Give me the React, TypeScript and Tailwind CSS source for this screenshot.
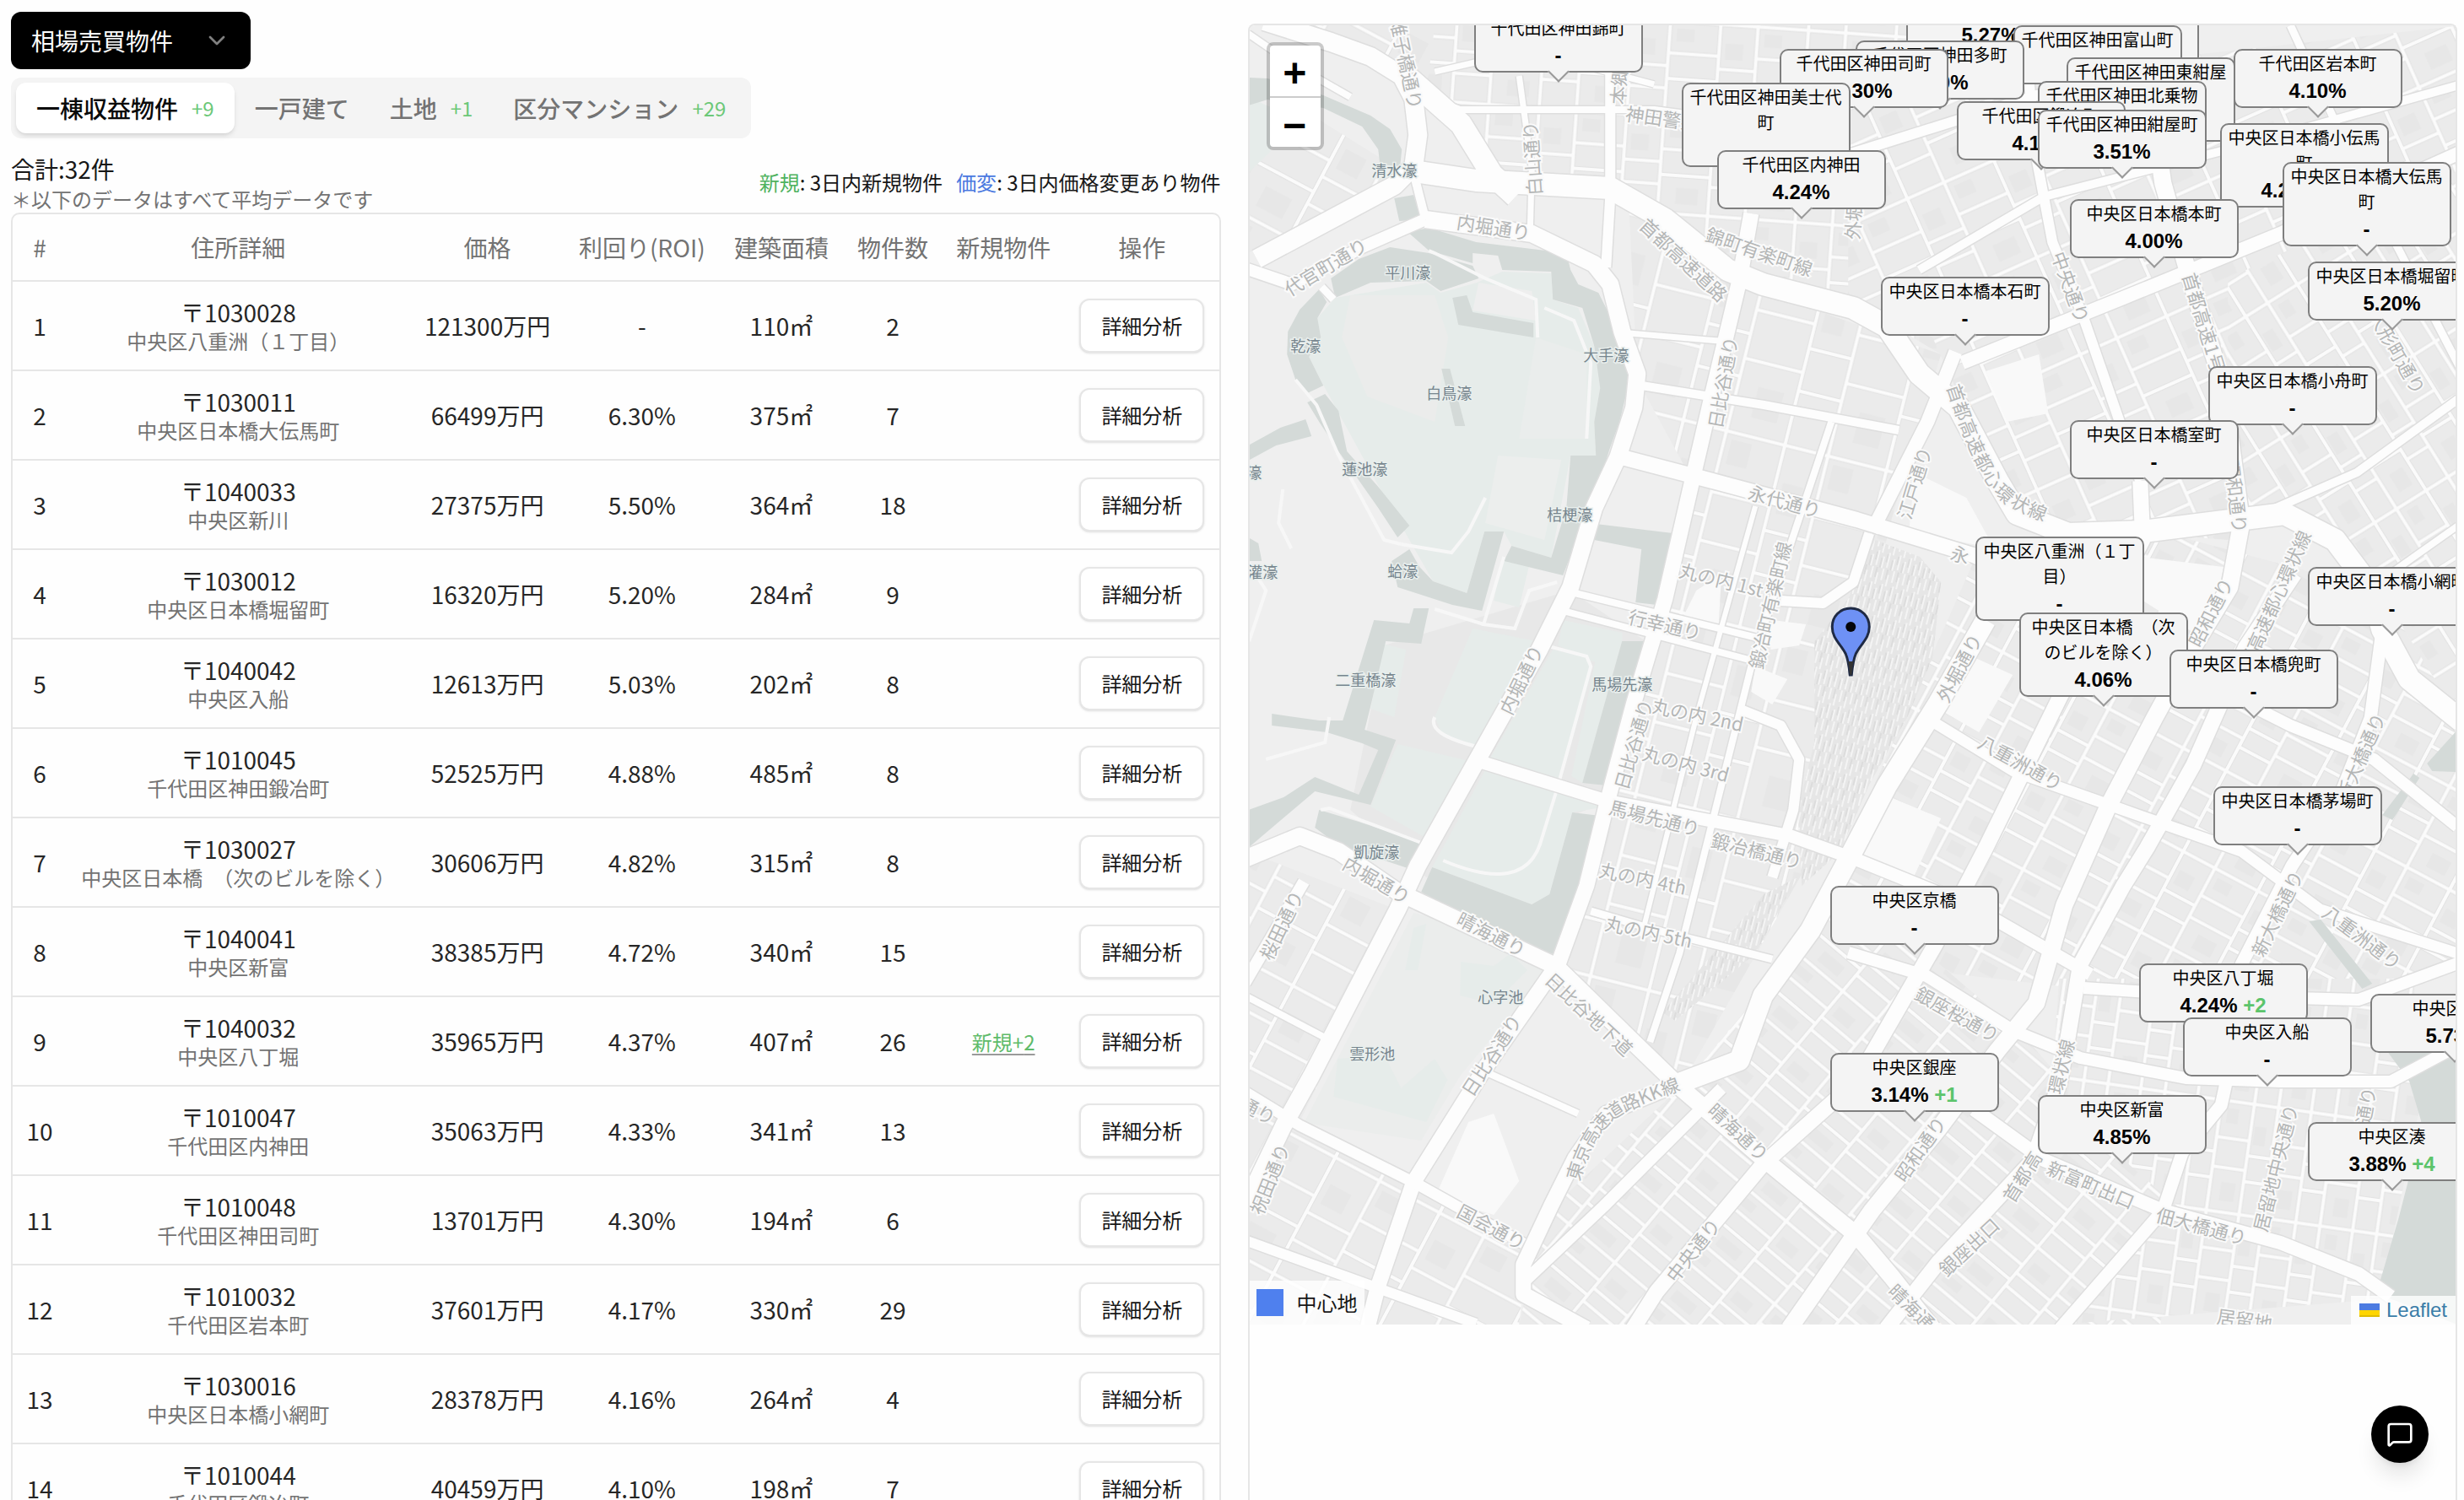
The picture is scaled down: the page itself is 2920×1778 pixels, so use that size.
import { useState } from "react";
import { ChevronDown, MessageSquare } from "lucide-react";

type Row = {
  zip: string;
  area: string;
  price: string;
  roi: string;
  size: string;
  count: number;
  added?: number;
};

const rows: Row[] = [
  { zip: "1030028", area: "中央区八重洲（１丁目）", price: "121300", roi: "-", size: "110", count: 2 },
  { zip: "1030011", area: "中央区日本橋大伝馬町", price: "66499", roi: "6.30%", size: "375", count: 7 },
  { zip: "1040033", area: "中央区新川", price: "27375", roi: "5.50%", size: "364", count: 18 },
  { zip: "1030012", area: "中央区日本橋堀留町", price: "16320", roi: "5.20%", size: "284", count: 9 },
  { zip: "1040042", area: "中央区入船", price: "12613", roi: "5.03%", size: "202", count: 8 },
  { zip: "1010045", area: "千代田区神田鍛冶町", price: "52525", roi: "4.88%", size: "485", count: 8 },
  { zip: "1030027", area: "中央区日本橋　（次のビルを除く）", price: "30606", roi: "4.82%", size: "315", count: 8 },
  { zip: "1040041", area: "中央区新富", price: "38385", roi: "4.72%", size: "340", count: 15 },
  { zip: "1040032", area: "中央区八丁堀", price: "35965", roi: "4.37%", size: "407", count: 26, added: 2 },
  { zip: "1010047", area: "千代田区内神田", price: "35063", roi: "4.33%", size: "341", count: 13 },
  { zip: "1010048", area: "千代田区神田司町", price: "13701", roi: "4.30%", size: "194", count: 6 },
  { zip: "1010032", area: "千代田区岩本町", price: "37601", roi: "4.17%", size: "330", count: 29 },
  { zip: "1030016", area: "中央区日本橋小網町", price: "28378", roi: "4.16%", size: "264", count: 4 },
  { zip: "1010044", area: "千代田区鍛冶町", price: "40459", roi: "4.10%", size: "198", count: 7 },
];

const tabs = [
  { label: "一棟収益物件", added: 9 },
  { label: "一戸建て" },
  { label: "土地", added: 1 },
  { label: "区分マンション", added: 29 },
];

// x / y are measured from the top left corner of the map, later ones lie on top
type Pin = { name: string; roi: string; x: number; y: number; added?: number };

const pins: Pin[] = [
  { name: "千代田区神田佐久間町", roi: "-", x: 925, y: -44 },
  { name: "千代田区神田須田町", roi: "5.27%", x: 778, y: -38 },
  { name: "千代田区神田錦町", roi: "-", x: 266, y: -14 },
  { name: "千代田区神田富山町", roi: "-", x: 905, y: 0 },
  { name: "千代田区神田多町", roi: "4.50%", x: 718, y: 18 },
  { name: "千代田区神田司町", roi: "4.30%", x: 628, y: 28 },
  { name: "千代田区岩本町", roi: "4.10%", x: 1166, y: 28 },
  { name: "千代田区神田東紺屋町", roi: "-", x: 968, y: 38 },
  { name: "千代田区神田北乗物町", roi: "-", x: 934, y: 66 },
  { name: "千代田区鍛冶町", roi: "4.10%", x: 838, y: 90 },
  { name: "千代田区神田美士代町", roi: "-", x: 512, y: 68 },
  { name: "千代田区神田紺屋町", roi: "3.51%", x: 934, y: 100 },
  { name: "千代田区内神田", roi: "4.24%", x: 554, y: 148 },
  { name: "中央区日本橋小伝馬町", roi: "4.26%", x: 1150, y: 116, added: 1 },
  { name: "中央区日本橋大伝馬町", roi: "-", x: 1224, y: 162 },
  { name: "中央区日本橋本町", roi: "4.00%", x: 972, y: 206 },
  { name: "中央区日本橋堀留町", roi: "5.20%", x: 1254, y: 280 },
  { name: "中央区日本橋本石町", roi: "-", x: 748, y: 298 },
  { name: "中央区日本橋小舟町", roi: "-", x: 1136, y: 404 },
  { name: "中央区日本橋室町", roi: "-", x: 972, y: 468 },
  { name: "中央区八重洲（１丁目）", roi: "-", x: 860, y: 606 },
  { name: "中央区日本橋小網町", roi: "-", x: 1254, y: 642 },
  { name: "中央区日本橋　（次のビルを除く）", roi: "4.06%", x: 912, y: 696 },
  { name: "中央区日本橋兜町", roi: "-", x: 1090, y: 740 },
  { name: "中央区日本橋茅場町", roi: "-", x: 1142, y: 902 },
  { name: "中央区京橋", roi: "-", x: 688, y: 1020 },
  { name: "中央区八丁堀", roi: "4.24%", x: 1054, y: 1112, added: 2 },
  { name: "中央区新川", roi: "5.73%", x: 1328, y: 1148 },
  { name: "中央区入船", roi: "-", x: 1106, y: 1176 },
  { name: "中央区銀座", roi: "3.14%", x: 688, y: 1218, added: 1 },
  { name: "中央区新富", roi: "4.85%", x: 934, y: 1268 },
  { name: "中央区湊", roi: "3.88%", x: 1254, y: 1300, added: 4 },
];

const water = [
  "1479,92 1502,93 1568,113 1624,137 1647,153 1661,177 1659,197 1635,195 1633,177 1614,150 1568,128 1502,118 1479,125",
  "1652,235 1675,231 1683,260 1658,262",
  "1668,275 1693,270 1749,287 1856,300 1861,320 1870,337 1894,347 1917,393 1929,443 1927,467 1919,500 1907,533 1903,546 1894,567 1880,602 1868,640 1852,682 1782,665 1791,647 1838,661 1856,602 1861,540 1891,540 1889,500 1896,460 1889,410 1875,365 1840,355 1838,322 1780,320 1775,303 1745,300 1745,312 1693,297",
  "1582,353 1577,330 1610,307 1647,293 1693,300 1745,315 1752,330 1707,345 1690,333 1624,335",
  "1563,343 1572,358 1561,377 1565,400 1551,423 1568,457 1547,467 1535,450 1525,420 1526,393 1540,367",
  "1549,477 1570,467 1586,487 1596,535 1633,577 1670,623 1656,637 1633,602 1586,535 1563,500",
  "1479,528 1517,507 1547,497 1554,517 1512,528 1479,546",
  "1479,637 1491,644 1495,665 1479,665",
  "1649,665 1670,651 1682,672 1698,689 1738,703 1759,630 1782,630 1756,724 1721,717 1656,696",
  "1721,353 1738,350 1745,370 1817,383 1817,400 1728,385",
  "1708,437 1718,437 1736,505 1724,505",
  "1891,621 1982,632 1963,717 1938,714 1945,651 1889,640",
  "1628,735 1670,739 1675,721 1693,721 1684,763 1642,760 1624,837 1617,865 1654,877 1633,931 1624,954 1558,938 1479,1005 1479,960 1521,945 1558,921 1610,942 1633,889 1614,881 1572,868 1507,860 1507,846 1563,854 1591,854",
  "1563,960 1610,974 1693,1002 1680,1033 1586,1002 1558,981",
  "1922,760 1950,760 1903,931 1875,928",
  "1863,963 1896,967 1870,1060 1847,1134 1712,1078 1684,1057 1697,1028 1815,1072 1836,1060",
  "2876,905 2912,865 2912,915 2882,914",
  "2860,917 2867,922 2835,972 2823,966",
  "2736,1092 2750,1090 2811,1166 2799,1172",
  "2828,1245 2912,1250 2912,1570 2816,1533 2842,1445 2860,1375 2869,1329 2855,1282",
];

const parks = [
  "1582,353 1690,335 1707,347 1750,335 1780,322 1838,324 1840,355 1870,365 1889,410 1896,460 1889,500 1891,540 1861,540 1838,661 1791,647 1782,630 1759,630 1738,703 1698,689 1670,640 1630,570 1570,460 1551,423 1565,400 1561,377",
  "1479,115 1512,130 1505,180 1479,205",
  "1745,745 1820,760 1780,850 1755,885 1710,873 1700,850",
  "1840,770 1885,780 1885,800 1845,940 1765,900",
  "1852,735 1922,750 1922,760 1875,928 1862,920 1890,785 1846,765",
  "1638,763 1666,770 1652,850 1624,840",
  "1656,882 1745,903 1698,998 1624,956",
  "1763,907 1842,931 1903,956 1863,963 1836,1060 1815,1072 1697,1028",
  "1780,660 1812,670 1800,720 1770,712",
  "1731,1140 1770,1145 1790,1130 1810,1150 1770,1190 1730,1180",
  "1585,1255 1640,1250 1660,1290 1700,1255 1715,1280 1690,1330 1580,1300",
  "1675,1100 1690,1095 1680,1150 1665,1150",
];

// street blocks of one quarter: outline plus the block pattern that fills it
const quarters = [
  { fill: "url(#kanda)", points: "1680,30 2300,30 2300,420 2200,360 2060,330 1990,270 1908,225 1770,210 1670,90" },
  { fill: "url(#west)", points: "1479,120 1560,140 1640,190 1640,225 1479,300" },
  { fill: "url(#west)", points: "1530,30 1700,30 1690,110 1600,50" },
  { fill: "url(#marunouchi)", points: "1930,240 2060,335 2300,420 2240,620 2150,1010 1990,1290 1850,1150 2000,560 1940,450" },
  { fill: "url(#muromachi)", points: "2190,110 2919,30 2919,420 2640,640 2390,620 2290,400 2190,360" },
  { fill: "url(#ningyocho)", points: "2640,330 2919,200 2919,860 2820,700 2720,600 2640,600" },
  { fill: "url(#kyobashi)", points: "2350,640 2560,630 2820,700 2919,860 2919,1150 2700,1180 2450,1170 2190,1140 2190,1000" },
  { fill: "url(#west)", points: "1479,1010 1660,1080 1540,1330 1680,1400 1810,1480 1800,1570 1479,1570" },
  { fill: "url(#ginza)", points: "2190,1050 2400,1230 2460,1300 2580,1430 2560,1570 1800,1570 1830,1440 2000,1280" },
  { fill: "url(#hatchobori)", points: "2440,1160 2860,1160 2870,1300 2820,1540 2440,1570 2580,1430 2430,1300" },
];

const roads: { d: string; w: number }[] = [
  { d: "M1479 40 L1530 75 L1600 115", w: 8 },
  { d: "M1498 25 L1577 50 L1624 67 L1661 90 L1675 117 L1680 160 L1675 197 L1652 220 L1489 307", w: 22 },
  { d: "M1670 93 L1731 147 L1768 207 L1796 233", w: 26 },
  { d: "M1675 203 L1749 214 L1908 223 L1973 260 L2047 320 L2089 337 L2196 365 L2236 387 L2274 443 L2321 483 L2367 570 L2390 609 L2451 633 L2539 630 L2651 616 L2707 609 L2767 640 L2809 696 L2823 746 L2855 805 L2917 855", w: 26 },
  { d: "M1689 260 L1815 277 L1889 313 L1908 337 L1922 393 L1940 443 L1936 483 L1917 542 L1889 602 L1861 696 L1824 770 L1749 903 L1680 1026 L1656 1078 L1554 1275 L1521 1334 L1475 1429", w: 20 },
  { d: "M1689 260 L1614 293 L1531 337 L1475 318", w: 14 },
  { d: "M1689 260 L1675 205", w: 10 },
  { d: "M1566 340 L1580 355", w: 9 },
  { d: "M1908 30 L1908 233 L1903 317", w: 12 },
  { d: "M1700 85 L1809 60 L1960 100", w: 7 },
  { d: "M1690 115 L1730 130 L1960 130 L2035 140", w: 8 },
  { d: "M1800 90 L1815 200 L1813 275", w: 7 },
  { d: "M2075 253 L2061 333 L2029 467 L2005 570 L1973 710 L1936 833 L1903 956 L1880 1050 L1847 1141 L1759 1267 L1675 1401 L1633 1524 L1620 1575", w: 18 },
  { d: "M1945 457 L2090 480 L2250 510", w: 10 },
  { d: "M1930 395 L2050 405", w: 7 },
  { d: "M1922 542 L2029 570 L2200 616 L2338 658 L2467 710", w: 18 },
  { d: "M1866 703 L2098 760", w: 8 },
  { d: "M1852 724 L2080 784", w: 8 },
  { d: "M2170 500 L2110 680 L2075 790 L2040 930 L1990 1130 L1955 1235", w: 8 },
  { d: "M2080 600 L2010 850 L1945 1110", w: 6 },
  { d: "M2060 840 L2110 860 L2132 900 L2125 960 L2100 1040", w: 12 },
  { d: "M2215 632 L2196 690 L2160 715 L2110 712", w: 12 },
  { d: "M1754 903 L1903 949 L2122 991 L2200 1019 L2338 1075 L2477 1155", w: 15 },
  { d: "M1885 1080 L1960 1102 L2100 1137", w: 9 },
  { d: "M1475 1018 L1540 991 L1586 1009 L1656 1057 L1843 1145 L1936 1236 L1991 1289 L2089 1373 L2200 1464 L2242 1514 L2290 1575", w: 20 },
  { d: "M2317 417 L2284 500 L2218 630", w: 16 },
  { d: "M2353 735 L2297 833 L2236 931 L2190 1019 L2145 1103 L2089 1180 L2061 1257 L1987 1285", w: 24 },
  { d: "M1987 1285 L1903 1320 L1866 1373 L1838 1429 L1805 1499 L1805 1534 L1880 1575", w: 18 },
  { d: "M1475 1294 L1540 1334 L1680 1404 L1805 1474", w: 13 },
  { d: "M1475 1470 L1633 1527 L1749 1569", w: 12 },
  { d: "M1545 1045 L1475 1165", w: 14 },
  { d: "M1759 1270 L1870 1320", w: 8 },
  { d: "M1475 1180 L1570 1230", w: 8 },
  { d: "M2536 570 L2539 640 L2441 826 L2353 1005 L2293 1120 L2200 1281 L2089 1380 L1963 1531 L1935 1575", w: 18 },
  { d: "M2398 30 L2413 187 L2432 287 L2469 377 L2536 570", w: 12 },
  { d: "M2536 30 L2563 217 L2590 313 L2635 460 L2656 620 L2642 696 L2599 767 L2553 851 L2498 956 L2446 1073 L2413 1189 L2367 1245 L2297 1338 L2218 1435 L2120 1575", w: 20 },
  { d: "M2719 680 L2661 767 L2599 907 L2544 1005 L2516 1050 L2465 1143 L2451 1226 L2441 1282 L2409 1375 L2297 1496 L2235 1575", w: 18 },
  { d: "M2823 746 L2809 851 L2776 935 L2716 1026 L2656 1143 L2645 1250 L2632 1310 L2586 1366 L2563 1435 L2441 1575", w: 15 },
  { d: "M2283 851 L2386 914 L2516 960 L2656 1009 L2749 1078 L2912 1130", w: 13 },
  { d: "M2595 800 L2714 860 L2813 900 L2912 980", w: 14 },
  { d: "M2190 1129 L2283 1157 L2386 1222 L2465 1254 L2590 1278 L2702 1282 L2833 1282 L2912 1240", w: 14 },
  { d: "M2339 1315 L2422 1375 L2563 1435 L2702 1473 L2795 1510 L2833 1537", w: 16 },
  { d: "M2469 1171 L2609 1180 L2795 1185 L2917 1140", w: 14 },
  { d: "M2190 183 L2413 113 L2536 90", w: 12 },
  { d: "M2274 320 L2422 233 L2656 173 L2917 100", w: 10 },
  { d: "M2325 430 L2516 353 L2702 277 L2917 180", w: 16 },
  { d: "M2656 620 L2793 560 L2917 470", w: 10 },
  { d: "M2714 30 L2793 200 L2917 440", w: 9 },
  { d: "M2804 700 L2917 620", w: 8 },
  { d: "M1805 1520 L1900 1430 L2040 1290", w: 14 },
];

const paths = [
  "M1693 297 L1700 300 L1760 330 L1820 355 L1822 400",
  "M1535 450 L1560 480 L1586 540 L1640 640 L1660 645",
  "M1660 645 L1720 655 L1740 630 L1760 590",
  "M1830 365 L1865 380 L1885 430 L1880 520",
  "M1782 660 L1758 740 L1795 745 L1812 700 L1845 690",
  "M1700 722 L1758 740",
  "M1820 762 L1880 778 L1885 790 L1845 935 L1825 1000 Q1805 1060 1710 1020",
  "M1700 850 Q1690 870 1750 885",
  "M1565 960 L1575 958 L1700 1005",
  "M1475 660 L1500 700 L1480 760",
  "M1520 580 L1515 620 L1530 650",
  "M1500 900 L1570 880 L1575 850",
];

const waterLabels = [
  { t: "清水濠", x: 1652, y: 201 },
  { t: "平川濠", x: 1668, y: 322 },
  { t: "乾濠", x: 1547, y: 409 },
  { t: "大手濠", x: 1903, y: 420 },
  { t: "白鳥濠", x: 1717, y: 465 },
  { t: "蓮池濠", x: 1617, y: 555 },
  { t: "濠", x: 1486, y: 559 },
  { t: "桔梗濠", x: 1860, y: 609 },
  { t: "灌濠", x: 1496, y: 677 },
  { t: "蛤濠", x: 1662, y: 676 },
  { t: "二重橋濠", x: 1618, y: 805 },
  { t: "馬場先濠", x: 1922, y: 810 },
  { t: "凱旋濠", x: 1631, y: 1009 },
  { t: "心字池", x: 1778, y: 1181 },
  { t: "雲形池", x: 1626, y: 1248 },
];

// a: rotation of the label in degrees
const roadLabels = [
  { t: "雉子橋通り", x: 1668, y: 75, a: 78 },
  { t: "白山通り", x: 1814, y: 188, a: -94 },
  { t: "本郷通り", x: 1918, y: 80, a: -86 },
  { t: "神田警察通り", x: 1992, y: 142, a: 8 },
  { t: "内堀通り", x: 1770, y: 268, a: 9 },
  { t: "代官町通り", x: 1570, y: 315, a: -31 },
  { t: "首都高速道路", x: 1996, y: 307, a: 43 },
  { t: "錦町有楽町線", x: 2085, y: 297, a: 19 },
  { t: "日比谷通り", x: 2040, y: 453, a: -80 },
  { t: "外堀通り", x: 2196, y: 240, a: -86 },
  { t: "永代通り", x: 2115, y: 593, a: 15 },
  { t: "江戸通り", x: 2267, y: 572, a: -73 },
  { t: "丸の内 1st", x: 2040, y: 686, a: 14 },
  { t: "行幸通り", x: 1973, y: 739, a: 13 },
  { t: "鍛冶町有楽町線", x: 2096, y: 717, a: -77 },
  { t: "永", x: 2323, y: 656, a: 15 },
  { t: "内堀通り", x: 1801, y: 805, a: -64 },
  { t: "丸の内 2nd", x: 2012, y: 846, a: 12 },
  { t: "丸の内 3rd", x: 1998, y: 904, a: 15 },
  { t: "日比谷通り", x: 1934, y: 882, a: -74 },
  { t: "馬場先通り", x: 1961, y: 968, a: 14 },
  { t: "鍛冶橋通り", x: 2082, y: 1007, a: 14 },
  { t: "丸の内 4th", x: 1947, y: 1040, a: 12 },
  { t: "内堀通り", x: 1632, y: 1042, a: 30 },
  { t: "晴海通り", x: 1768, y: 1106, a: 27 },
  { t: "丸の内 5th", x: 1954, y: 1103, a: 12 },
  { t: "桜田通り", x: 1517, y: 1096, a: -64 },
  { t: "日比谷地下道", x: 1884, y: 1201, a: 43 },
  { t: "日比谷通り", x: 1766, y: 1250, a: -57 },
  { t: "晴海通り", x: 2061, y: 1341, a: 43 },
  { t: "祝田通り", x: 1503, y: 1397, a: -68 },
  { t: "国会通り", x: 1768, y: 1453, a: 28 },
  { t: "中央通り", x: 2005, y: 1481, a: -52 },
  { t: "通り", x: 1491, y: 1315, a: 27 },
  { t: "昭和通り", x: 2274, y: 1361, a: -55 },
  { t: "銀座桜通り", x: 2320, y: 1201, a: 29 },
  { t: "首都高", x: 2395, y: 1394, a: -58 },
  { t: "環状線", x: 2441, y: 1264, a: -76 },
  { t: "新富町出口", x: 2478, y: 1403, a: 23 },
  { t: "佃大橋通り", x: 2609, y: 1452, a: 15 },
  { t: "居留地中央通り", x: 2695, y: 1384, a: -76 },
  { t: "銀座出口", x: 2332, y: 1477, a: -43 },
  { t: "晴海通り", x: 2274, y: 1556, a: 45 },
  { t: "新大橋通り", x: 2697, y: 1082, a: -64 },
  { t: "八重洲通り", x: 2800, y: 1110, a: 37 },
  { t: "通り", x: 2802, y: 1310, a: -80 },
  { t: "居留地", x: 2660, y: 1563, a: 8 },
  { t: "八重洲通り", x: 2395, y: 903, a: 29 },
  { t: "外堀通り", x: 2320, y: 791, a: -62 },
  { t: "昭和通り", x: 2618, y: 725, a: -63 },
  { t: "首都高速都心環状線", x: 2690, y: 720, a: -66 },
  { t: "昭和通り", x: 2651, y: 588, a: 83 },
  { t: "中央通り", x: 2455, y: 340, a: 70 },
  { t: "首都高速1号", x: 2613, y: 382, a: 73 },
  { t: "新大橋通り", x: 2796, y: 896, a: -66 },
  { t: "人形町通り", x: 2842, y: 417, a: 60 },
];

function Blocks({ id, angle, w, h }: { id: string; angle: number; w: number; h: number }) {
  // two columns of uneven blocks per tile so the streets do not look ruled
  return (
    <pattern id={id} width={w * 2} height={h * 3} patternUnits="userSpaceOnUse" patternTransform={`rotate(${angle})`}>
      <rect width={w * 2} height={h * 3} fill="#fbfbfb" />
      <g fill="#ebebeb" stroke="#e2e2e2">
        <rect x="3" y="3" width={w * 1.15 - 5} height={h - 5} />
        <rect x={w * 1.15 + 3} y="3" width={w * 0.85 - 5} height={h * 1.4 - 5} />
        <rect x="3" y={h + 3} width={w * 1.15 - 5} height={h * 0.8 - 5} />
        <rect x="3" y={h * 1.8 + 3} width={w * 1.15 - 5} height={h * 1.2 - 5} />
        <rect x={w * 1.15 + 3} y={h * 1.4 + 3} width={w * 0.85 - 5} height={h * 0.7 - 5} />
        <rect x={w * 1.15 + 3} y={h * 2.1 + 3} width={w * 0.85 - 5} height={h * 0.9 - 5} />
      </g>
      <g fill="#e7e7e7">
        <rect x="9" y="9" width={w * 0.4} height={h * 0.4} />
        <rect x={w * 1.3} y={h * 0.6} width={w * 0.4} height={h * 0.5} />
        <rect x={w * 0.4} y={h * 2.2} width={w * 0.5} height={h * 0.5} />
      </g>
    </pattern>
  );
}

function StreetMap() {
  return (
    <svg
      viewBox="1480 30 1431 1540"
      preserveAspectRatio="xMidYMid slice"
      className="absolute inset-0 size-full"
      aria-hidden="true"
    >
      <defs>
        <Blocks id="kanda" angle={4} w={52} h={38} />
        <Blocks id="west" angle={28} w={70} h={52} />
        <Blocks id="marunouchi" angle={14} w={62} h={74} />
        <Blocks id="muromachi" angle={-24} w={56} h={42} />
        <Blocks id="ningyocho" angle={-32} w={36} h={48} />
        <Blocks id="kyobashi" angle={28} w={50} h={36} />
        <Blocks id="ginza" angle={40} w={62} h={28} />
        <Blocks id="hatchobori" angle={8} w={34} h={44} />
        <pattern id="rails" width="13" height="38" patternUnits="userSpaceOnUse" patternTransform="rotate(14)">
          <rect width="13" height="38" fill="#e6e6e6" />
          <path d="M2 0 V14 M5 18 V36 M9 6 V20 M12 24 V38" stroke="#f4f4f4" strokeWidth="2" />
          <path d="M7 0 V12 M3 20 V30 M10 26 V38" stroke="#dcdcdc" strokeWidth="2" />
        </pattern>
        <path id="kk-line" d="M1862 1398 Q1880 1330 1920 1310 Q1950 1296 1996 1280" />
        <path id="ring-line" d="M2316 455 Q2350 560 2378 585 Q2408 606 2447 614" />
      </defs>

      <rect x="1480" y="30" width="1431" height="1540" fill="#efefef" />
      {quarters.map((q, i) => (
        <polygon key={i} points={q.points} fill={q.fill} />
      ))}
      <polygon points="1675,1082 1731,1096 1833,1152 1731,1274 1684,1352 1545,1331" fill="#ebedec" />
      <polygon points="1640,765 1860,700 1950,760 1903,950 1690,1040 1600,960" fill="#e8e8e8" />
      {parks.map((p) => (
        <polygon key={p} points={p} fill="#e6ecea" />
      ))}
      <polygon points="1752,335 1815,345 1820,380 1745,368" fill="#eeeeee" />
      <polygon points="1600,350 1700,350 1716,400 1700,500 1620,470 1590,400" fill="#ebeceb" />
      <polygon points="1775,540 1850,545 1830,640 1760,620" fill="#eceeed" />
      <polygon points="1820,400 1880,420 1880,520 1800,520" fill="#eaedec" />
      {water.map((p) => (
        <polygon key={p} points={p} fill="#d4dad8" />
      ))}
      <polygon
        points="2222,640 2275,660 2300,690 2290,780 2260,850 2215,930 2180,1010 2135,1050 2130,960 2150,880 2150,760 2190,710"
        fill="url(#rails)"
      />
      <polygon points="2090,1060 2130,1040 2080,1130 1985,1210 1970,1200" fill="url(#rails)" />
      <g fill="#f9f9f9">
        <polygon points="1740,1330 1770,1320 1800,1400 1770,1440 1700,1420" />
        <polygon points="2269,560 2330,590 2363,650 2262,630" />
        <polygon points="2353,440 2416,420 2427,490 2378,500" />
        <polygon points="2010,700 2040,680 2036,745 1990,740" />
        <polygon points="2100,735 2140,740 2132,765 2098,770" />
        <polygon points="2080,790 2118,805 2100,835 2075,820" />
        <polygon points="2330,775 2385,800 2345,868 2305,845" />
        <polygon points="2536,660 2635,672 2615,760 2536,710" />
        <polygon points="2240,945 2300,970 2265,1045 2205,1020" />
      </g>

      <g fill="none" stroke="#f7f7f7" strokeWidth="4">
        {paths.map((d) => (
          <path key={d} d={d} />
        ))}
      </g>
      <g fill="none" stroke="#dedede" strokeLinejoin="round">
        {roads.map((r) => (
          <path key={r.d} d={r.d} strokeWidth={r.w + 3} />
        ))}
      </g>
      <g fill="none" stroke="#fdfdfd" strokeLinejoin="round">
        {roads.map((r) => (
          <path key={r.d} d={r.d} strokeWidth={r.w} />
        ))}
      </g>

      <g
        fill="#b4b6b6"
        stroke="#fafafa"
        strokeWidth="4"
        paintOrder="stroke"
        fontSize="22"
        textAnchor="middle"
        dominantBaseline="central"
      >
        {roadLabels.map((l, i) => (
          <text key={i} transform={`translate(${l.x} ${l.y}) rotate(${l.a})`}>
            {l.t}
          </text>
        ))}
        <text textAnchor="start">
          <textPath href="#kk-line">東京高速道路KK線</textPath>
        </text>
        <text textAnchor="start">
          <textPath href="#ring-line">首都高速都心環状線</textPath>
        </text>
      </g>
      <g
        fill="#76858e"
        stroke="#e9efed"
        strokeWidth="3"
        paintOrder="stroke"
        fontSize="18"
        textAnchor="middle"
        dominantBaseline="central"
      >
        {waterLabels.map((l) => (
          <text key={l.t} x={l.x} y={l.y}>
            {l.t}
          </text>
        ))}
      </g>

      {/* center marker */}
      <path
        d="M2193 721 C2180 721 2171 731 2171 743 C2171 757 2181 763 2187 775 C2190 782 2191 790 2192 800 H2194 C2195 790 2196 782 2199 775 C2205 763 2215 757 2215 743 C2215 731 2206 721 2193 721 Z"
        fill="#6e91f5"
        stroke="#1f2a44"
        strokeWidth="3"
      />
      <path d="M2190 784 L2192 800 H2194 L2196 784 Z" fill="#333333" />
      <circle cx="2193" cy="743" r="6" fill="#05050a" />
    </svg>
  );
}

function Bubble({ pin }: { pin: Pin }) {
  return (
    <div
      className="absolute w-[200px] rounded-[10px] border-2 border-[#7f7f7f] bg-[#f4f4f4] px-1 text-center text-black"
      style={{ left: pin.x, top: pin.y }}
    >
      <span className="absolute -bottom-[10px] left-1/2 size-[18px] -translate-x-1/2 rotate-45 border-r-2 border-b-2 border-[#999999] bg-[#f4f4f4]" />
      <p className="relative text-[20px] leading-[30px]">{pin.name}</p>
      <p className="relative font-['Liberation_Sans',sans-serif] text-[24px] leading-[36px] font-bold">
        {pin.roi}
        {pin.added && <span className="text-[#5cc46b]"> +{pin.added}</span>}
      </p>
    </div>
  );
}

function MapPanel() {
  return (
    <section className="mt-7 min-h-0 rounded-t-lg border-2 border-b-0 border-[#e6e6e6]">
      <div className="relative h-[1540px] overflow-hidden rounded-t-md">
        <StreetMap />
        {pins.map((pin) => (
          <Bubble key={pin.name} pin={pin} />
        ))}

        <div className="absolute top-5 left-5 flex flex-col overflow-hidden rounded-lg border-4 border-black/20 bg-white bg-clip-padding font-['Liberation_Mono',monospace] text-[48px] leading-[48px] font-bold text-black">
          <button aria-label="拡大" className="size-[60px] pt-3">
            +
          </button>
          <button aria-label="縮小" className="size-[60px] border-t-2 border-[#cccccc] pt-3">
            −
          </button>
        </div>

        <div className="absolute bottom-0 left-0 flex items-center gap-4 bg-white/80 p-2 text-[24px] leading-9">
          <span className="size-8 bg-[#4f80ee]" />
          中心地
        </div>

        <div className="absolute right-0 bottom-0 flex items-center gap-2 bg-white/80 px-[10px] font-['Liberation_Sans',sans-serif] text-[24px] leading-[34px]">
          <svg viewBox="0 0 12 8" className="h-4 w-6" aria-hidden="true">
            <path fill="#4C7BE1" d="M0 0h12v4H0z" />
            <path fill="#FFD500" d="M0 4h12v3H0z" />
            <path fill="#E0BC00" d="M0 7h12v1H0z" />
          </svg>
          <a href="#leaflet" className="text-[#3a7da8]">
            Leaflet
          </a>
        </div>
      </div>
    </section>
  );
}

function PriceTable() {
  return (
    <div className="overflow-hidden rounded-[10px] border-2 border-[#e6e6e6]">
      <table className="w-full table-fixed border-separate border-spacing-0 text-center text-[28px] leading-10">
        <colgroup>
          <col className="w-[64px]" />
          <col className="w-[406px]" />
          <col className="w-[184px]" />
          <col className="w-[182px]" />
          <col className="w-[148px]" />
          <col className="w-[116px]" />
          <col className="w-[146px]" />
          <col className="w-[182px]" />
        </colgroup>
        <thead className="text-[#737373]">
          <tr>
            {["#", "住所詳細", "価格", "利回り(ROI)", "建築面積", "物件数", "新規物件", "操作"].map((title) => (
              <th key={title} className="h-20 border-b-2 border-[#e6e6e6] font-normal whitespace-nowrap">
                {title}
              </th>
            ))}
          </tr>
        </thead>
        <tbody className="text-[#262626] [&_td]:h-[106px] [&_td]:border-b-2 [&_td]:border-[#e6e6e6]">
          {rows.map((row, i) => (
            <tr key={row.zip}>
              <td>{i + 1}</td>
              <td className="whitespace-nowrap">
                <p className="leading-9">〒{row.zip}</p>
                <p className="text-[24px] leading-8 text-[#737373]">{row.area}</p>
              </td>
              <td>{row.price}万円</td>
              <td>{row.roi}</td>
              <td>{row.size}㎡</td>
              <td>{row.count}</td>
              <td>
                {row.added && (
                  <a
                    href={`#new-${row.zip}`}
                    className="text-[24px] text-[#5fbb6a] underline decoration-[#9a9a9a] decoration-2 underline-offset-4"
                  >
                    新規+{row.added}
                  </a>
                )}
              </td>
              <td>
                <button className="h-16 rounded-xl border-2 border-[#e6e6e6] bg-white px-6 text-[24px] leading-8 text-[#171717] shadow-sm">
                  詳細分析
                </button>
              </td>
            </tr>
          ))}
        </tbody>
      </table>
    </div>
  );
}

export default function App() {
  const [active, setActive] = useState(0);

  return (
    <main className="grid h-screen grid-cols-2 gap-8 overflow-hidden bg-[#fefefe] pr-2 pl-[13px] font-['Noto_Sans_CJK_JP',sans-serif] text-[#171717]">
      <section className="min-h-0 min-w-0 overflow-hidden pt-[14px]">
        <div className="relative w-[284px]">
          <select
            aria-label="物件種別"
            className="h-[68px] w-full appearance-none rounded-xl bg-black pr-16 pl-6 text-[28px] text-white"
          >
            <option>相場売買物件</option>
          </select>
          <ChevronDown className="pointer-events-none absolute top-1/2 right-6 size-8 -translate-y-1/2 text-white/50" />
        </div>

        <div
          role="tablist"
          className="mt-[10px] flex w-fit rounded-xl bg-[#f4f4f4] p-[6px] text-[28px] leading-10 font-medium"
        >
          {tabs.map((tab, i) => (
            <button
              key={tab.label}
              role="tab"
              aria-selected={i === active}
              onClick={() => setActive(i)}
              className={`flex h-[60px] items-center gap-4 rounded-xl px-6 ${
                i === active ? "bg-white text-[#0a0a0a] shadow-md" : "text-[#737373]"
              }`}
            >
              {tab.label}
              {tab.added && <span className="text-[24px] font-normal text-[#6cc878]">+{tab.added}</span>}
            </button>
          ))}
        </div>

        <div className="mt-4 flex items-center justify-between">
          <div>
            <h2 className="text-[28px] leading-10">合計:32件</h2>
            <p className="text-[24px] leading-8 text-[#737373]">＊以下のデータはすべて平均データです</p>
          </div>
          <p className="flex gap-4 text-[24px] leading-8">
            <span>
              <span className="text-[#4fb25e]">新規</span>: 3日内新規物件
            </span>
            <span>
              <span className="text-[#4a79e0]">価変</span>: 3日内価格変更あり物件
            </span>
          </p>
        </div>

        <PriceTable />
      </section>

      <MapPanel />

      <button
        aria-label="チャットを開く"
        className="fixed right-[42px] bottom-11 grid size-[68px] place-items-center rounded-full bg-black text-white shadow-xl"
      >
        <MessageSquare className="size-8" />
      </button>
    </main>
  );
}
